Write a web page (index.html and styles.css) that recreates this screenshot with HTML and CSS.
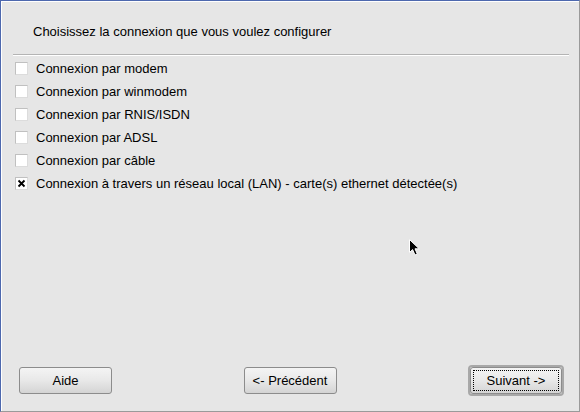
FILE: index.html
```html
<!DOCTYPE html>
<html>
<head>
<meta charset="utf-8">
<link rel="stylesheet" href="styles.css">
</head>
<body>
<div class="frame">
  <div class="inner">
    <div class="title">Choisissez la connexion que vous voulez configurer</div>
    <div class="sep"></div>
    <ul class="list">
      <li class="row"><span class="cb"></span><span class="label">Connexion par modem</span></li>
      <li class="row"><span class="cb"></span><span class="label">Connexion par winmodem</span></li>
      <li class="row"><span class="cb"></span><span class="label">Connexion par RNIS/ISDN</span></li>
      <li class="row"><span class="cb"></span><span class="label">Connexion par ADSL</span></li>
      <li class="row"><span class="cb"></span><span class="label">Connexion par câble</span></li>
      <li class="row"><span class="cb checked"><svg width="9" height="9" viewBox="0 0 9 9"><path d="M1.5 1.5 L7.5 7.5 M7.5 1.5 L1.5 7.5" stroke="#000" stroke-width="1.8" fill="none"/></svg></span><span class="label">Connexion à travers un réseau local (LAN) - carte(s) ethernet détectée(s)</span></li>
    </ul>
    <div class="buttons">
      <button class="btn">Aide</button>
      <button class="btn">&lt;- Précédent</button>
      <span class="default"><button class="btn focus"><span class="focusrect">Suivant -&gt;</span></button></span>
    </div>
  </div>
  <svg class="cursor" width="12" height="18" viewBox="0 0 12 18"><path d="M0.5 0.5 L0.5 13.5 L3.6 10.6 L6 16 L8.3 15 L6 9.8 L10.2 9.8 Z" fill="#000" stroke="#fff" stroke-width="1"/></svg>
</div>
</body>
</html>
```
FILE: styles.css
```css
html, body {
  margin: 0;
  padding: 0;
  background: #e6e6e6;
}
.frame {
  position: relative;
  width: 580px;
  height: 412px;
  box-sizing: border-box;
  border-top: 1px solid #4d68ae;
  border-left: 1px solid #4d68ae;
  border-right: 1px solid #9a9a9a;
  border-bottom: 1px solid #9a9a9a;
  background: #e6e6e6;
  font-family: "Liberation Sans", Arial, sans-serif;
  font-size: 13px;
  color: #000;
}
.inner {
  height: 100%;
  box-sizing: border-box;
  border-top: 1px solid #ffffff;
  border-left: 1px solid #ffffff;
  display: flex;
  flex-direction: column;
}
.title {
  padding: 22px 0 0 31px;
  height: 15px;
  line-height: 15px;
}
.sep {
  margin: 15px 0 0 11px;
  width: 556px;
  height: 1px;
  background: #b4b4b4;
  border-bottom: 1px solid #ffffff;
}
.list {
  list-style: none;
  margin: 1px 0 0 0;
  padding: 0 0 0 13px;
}
.row {
  height: 23px;
  display: flex;
  align-items: center;
}
.cb {
  width: 13px;
  height: 13px;
  box-sizing: border-box;
  background: #ffffff;
  border: 1px solid #c0c0c0;
  border-right-color: #dcdcdc;
  border-bottom-color: #dcdcdc;
  display: flex;
  align-items: center;
  justify-content: center;
  margin-right: 8px;
}
.cb svg { display: block; }
.label {
  line-height: 15px;
}
.buttons {
  margin-top: auto;
  margin-bottom: 15px;
  display: flex;
  align-items: center;
  justify-content: space-between;
  padding: 0 15px 0 17px;
}
.btn {
  font-family: "Liberation Sans", Arial, sans-serif;
  font-size: 13px;
  color: #000;
  width: 93px;
  height: 27px;
  box-sizing: border-box;
  border: 1px solid #8c8c8c;
  border-radius: 3px;
  background: linear-gradient(#f4f4f4, #e8e8e8 50%, #d4d4d4);
  padding: 0;
  display: flex;
  align-items: center;
  justify-content: center;
}
.default {
  display: block;
  border: 2px solid #a8a8a8;
  border-radius: 4px;
  padding: 0;
}
.btn.focus {
  width: 92px;
  height: 27px;
  padding: 2px;
}
.focusrect {
  flex: 1;
  align-self: stretch;
  display: flex;
  align-items: center;
  justify-content: center;
  border: 1px dotted #000;
}
.cursor {
  position: absolute;
  left: 408px;
  top: 238px;
}
```
